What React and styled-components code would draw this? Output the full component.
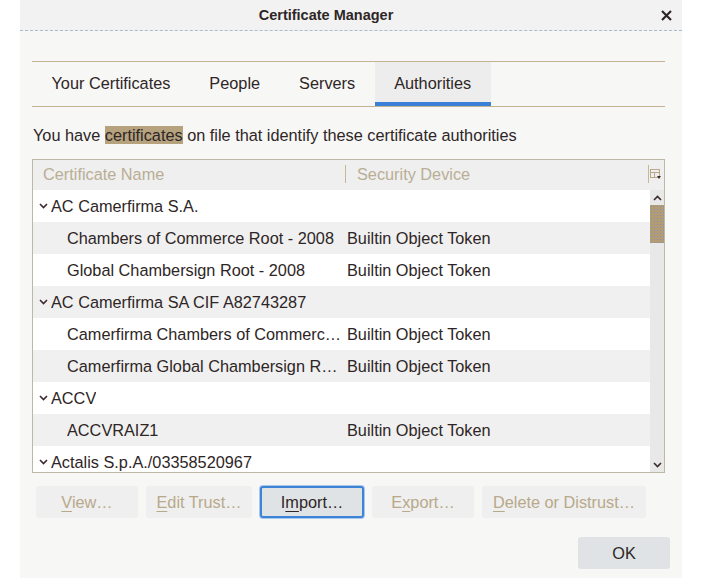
import React from "react";
import styled, { createGlobalStyle } from "styled-components";

const GlobalStyle = createGlobalStyle`
  html, body {
    margin: 0;
    padding: 0;
    background: #ffffff;
  }
  body {
    font-family: "Liberation Sans", Arial, sans-serif;
    color: #2e2626;
  }
`;

const FS = "16.3px";

export const Dialog = styled.div`
  width: 662px;
  height: 578px;
  margin-left: 20px;
  background: #f7f7f6;
  display: flex;
  flex-direction: column;
`;

export const TitleBar = styled.div`
  height: 30px;
  flex: none;
  background: #f2f2f2;
  border-bottom: 1px dashed #a9bccb;
  display: flex;
  align-items: center;
  justify-content: center;
  padding-right: 50px;
  position: relative;
  font-size: 14.5px;
  font-weight: bold;
  color: #2e2626;
`;

export const CloseButton = styled.button`
  position: absolute;
  right: 6px;
  top: 5px;
  width: 20px;
  height: 20px;
  padding: 0;
  border: none;
  background: none;
  display: flex;
  align-items: center;
  justify-content: center;
`;

export const Content = styled.div`
  flex: 1;
  display: flex;
  flex-direction: column;
  padding: 30px 17px 0 12px;
`;

export const TabStrip = styled.div`
  display: flex;
  height: 44px;
  border-top: 1px solid #c4b393;
  border-bottom: 1px solid #c4b393;
`;

export const Tab = styled.div`
  display: flex;
  align-items: center;
  padding: 0 19.5px 1px;
  font-size: ${FS};
  color: #2e2626;
  background: ${(p) => (p.$active ? "#ededed" : "transparent")};
  box-shadow: ${(p) => (p.$active ? "inset 0 -4px 0 #3a80d6" : "none")};
`;

export const Description = styled.p`
  margin: 18px 0 0 1px;
  font-size: ${FS};
  line-height: 20px;
`;

export const Highlight = styled.span`
  background: #b6a37e;
  color: #2e2626;
`;

export const Tree = styled.div`
  margin-top: 14px;
  height: 312px;
  border: 1px solid #bdb7a6;
  display: flex;
  flex-direction: column;
  background: #ffffff;
  overflow: hidden;
`;

export const TreeHeader = styled.div`
  height: 30px;
  box-sizing: border-box;
  padding-bottom: 3px;
  flex: none;
  background: #efefef;
  display: grid;
  grid-template-columns: 312px 1fr 16px;
  align-items: center;
`;

export const HeaderCell = styled.div`
  font-size: ${FS};
  color: #b9ae95;
  padding-left: ${(p) => p.$pad || 10}px;
  height: 18px;
  line-height: 18px;
  border-left: ${(p) => (p.$divider ? "1px solid #c8b896" : "none")};
  display: flex;
  align-items: center;
`;

export const TreeBody = styled.div`
  flex: 1;
  display: flex;
  min-height: 0;
`;

export const Rows = styled.div`
  flex: 1;
  overflow: hidden;
`;

export const Row = styled.div`
  height: 32px;
  display: grid;
  grid-template-columns: 312px 1fr;
  align-items: center;
  background: ${(p) => (p.$odd ? "#f0f0f0" : "#ffffff")};
  font-size: ${FS};
`;

export const NameCell = styled.div`
  display: flex;
  align-items: center;
  padding-left: ${(p) => (p.$child ? 34 : 6)}px;
  padding-right: 3px;
  white-space: nowrap;
  overflow: hidden;
  min-width: 0;
`;

export const NameText = styled.span`
  overflow: hidden;
  text-overflow: ellipsis;
  white-space: nowrap;
`;

export const Twisty = styled.span`
  width: 12px;
  display: flex;
  align-items: center;
  flex: none;
`;

export const DeviceCell = styled.div`
  padding-left: 2px;
  white-space: nowrap;
`;

export const Scrollbar = styled.div`
  width: 14px;
  flex: none;
  background: #e8e8e8;
  display: flex;
  flex-direction: column;
  align-items: center;
`;

export const ScrollArrow = styled.div`
  height: 15px;
  width: 14px;
  display: flex;
  align-items: center;
  justify-content: center;
`;

export const ScrollThumb = styled.div`
  width: 14px;
  height: 38px;
  background: #b39c74;
  background-image: radial-gradient(#7c93b8 0.6px, transparent 0.8px);
  background-size: 3px 3px;
`;

export const ScrollTrack = styled.div`
  flex: 1;
`;

export const ButtonRow = styled.div`
  display: flex;
  gap: 8px;
  margin-top: 13px;
  padding-left: 4px;
`;

export const Button = styled.button`
  height: 32px;
  width: ${(p) => p.$w}px;
  font-family: "Liberation Sans", Arial, sans-serif;
  font-size: ${FS};
  border-radius: 3px;
  padding: 0;
  color: ${(p) => (p.disabled ? "#b7a98a" : "#2e2626")};
  background: ${(p) => (p.disabled ? "#efefef" : "#e0e3e5")};
  border: ${(p) => (p.$focus ? "2px solid #3d84d6" : "none")};
  box-shadow: ${(p) => (p.$focus ? "0 0 0 1px #a9c8ee" : "none")};
  u {
    text-decoration-thickness: 1px;
    text-underline-offset: 3px;
  }
`;

export const Footer = styled.div`
  display: flex;
  justify-content: flex-end;
  margin-top: 19px;
  margin-right: -5px;
`;

const Chevron = ({ up }) => (
  <svg width="9" height="6" viewBox="0 0 9 6">
    <path
      d={up ? "M1 5 L4.5 1.5 L8 5" : "M1 1 L4.5 4.5 L8 1"}
      fill="none"
      stroke="#3a2a2a"
      strokeWidth="1.6"
    />
  </svg>
);

const ColumnPicker = () => (
  <svg width="12" height="12" viewBox="0 0 12 12">
    <rect x="0.5" y="1.5" width="9" height="8" fill="none" stroke="#b9a98a" />
    <line x1="0.5" y1="4.5" x2="9.5" y2="4.5" stroke="#b9a98a" />
    <line x1="4.5" y1="4.5" x2="4.5" y2="9.5" stroke="#b9a98a" />
    <path d="M7 8 L11 8 L9 11 Z" fill="#3a2a2a" />
  </svg>
);

const rows = [
  { name: "AC Camerfirma S.A." },
  { name: "Chambers of Commerce Root - 2008", device: "Builtin Object Token", child: true },
  { name: "Global Chambersign Root - 2008", device: "Builtin Object Token", child: true },
  { name: "AC Camerfirma SA CIF A82743287" },
  { name: "Camerfirma Chambers of Commerce Root", device: "Builtin Object Token", child: true },
  { name: "Camerfirma Global Chambersign Root", device: "Builtin Object Token", child: true },
  { name: "ACCV" },
  { name: "ACCVRAIZ1", device: "Builtin Object Token", child: true },
  { name: "Actalis S.p.A./03358520967" },
];

const tabs = ["Your Certificates", "People", "Servers", "Authorities"];

const App = () => {
  return (
    <>
      <GlobalStyle />
      <Dialog>
        <TitleBar>
          Certificate Manager
          <CloseButton aria-label="Close">
            <svg width="11" height="11" viewBox="0 0 11 11">
              <path d="M1 1 L10 10 M10 1 L1 10" stroke="#2e2626" strokeWidth="2.2" />
            </svg>
          </CloseButton>
        </TitleBar>
        <Content>
          <TabStrip>
            {tabs.map((t) => (
              <Tab key={t} $active={t === "Authorities"}>
                {t}
              </Tab>
            ))}
          </TabStrip>

          <Description>
            You have <Highlight>certificates</Highlight> on file that identify these certificate authorities
          </Description>

          <Tree>
            <TreeHeader>
              <HeaderCell>Certificate Name</HeaderCell>
              <HeaderCell $divider $pad={11}>Security Device</HeaderCell>
              <HeaderCell $divider $pad={1}>
                <ColumnPicker />
              </HeaderCell>
            </TreeHeader>
            <TreeBody>
              <Rows>
                {rows.map((r, i) => (
                  <Row key={r.name} $odd={i % 2 === 1}>
                    <NameCell $child={r.child}>
                      {!r.child && (
                        <Twisty>
                          <Chevron />
                        </Twisty>
                      )}
                      <NameText>{r.name}</NameText>
                    </NameCell>
                    <DeviceCell>{r.device}</DeviceCell>
                  </Row>
                ))}
              </Rows>
              <Scrollbar>
                <ScrollArrow>
                  <Chevron up />
                </ScrollArrow>
                <ScrollThumb />
                <ScrollTrack />
                <ScrollArrow>
                  <Chevron />
                </ScrollArrow>
              </Scrollbar>
            </TreeBody>
          </Tree>

          <ButtonRow>
            <Button disabled $w={102}>
              <u>V</u>iew…
            </Button>
            <Button disabled $w={106}>
              <u>E</u>dit Trust…
            </Button>
            <Button $focus $w={104}>
              I<u>m</u>port…
            </Button>
            <Button disabled $w={102}>
              E<u>x</u>port…
            </Button>
            <Button disabled $w={164}>
              <u>D</u>elete or Distrust…
            </Button>
          </ButtonRow>

          <Footer>
            <Button $w={92}>OK</Button>
          </Footer>
        </Content>
      </Dialog>
    </>
  );
};

export default App;
